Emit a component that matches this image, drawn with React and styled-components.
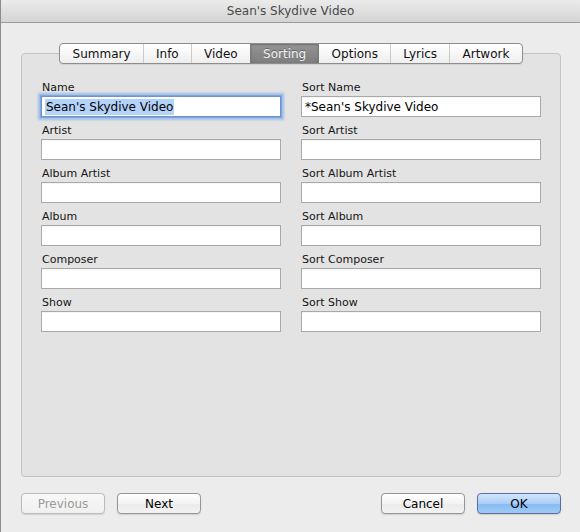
import React from "react";
import styled, { createGlobalStyle } from "styled-components";

const Global = createGlobalStyle`
  html, body { margin: 0; padding: 0; background: #ececec; }
  body { font-family: "DejaVu Sans", "Liberation Sans", sans-serif; }
  * { box-sizing: border-box; }
`;

const Window = styled.div`
  width: 580px;
  height: 532px;
  display: flex;
  flex-direction: column;
  background: #ececec;
  border-left: 1px solid #8c8c8c;
  overflow: hidden;
`;

const TitleBar = styled.div`
  height: 23px;
  flex: none;
  display: flex;
  align-items: center;
  justify-content: center;
  background: linear-gradient(#ebebeb, #d4d4d4);
  border-bottom: 1px solid #9b9b9b;
  color: #4a4a4a;
  font-size: 12px;
`;

const Body = styled.div`
  flex: 1;
  display: flex;
  flex-direction: column;
  padding: 20px 19px 18px 20px;
`;

const TabStrip = styled.div`
  position: relative;
  z-index: 1;
  align-self: center;
  display: flex;
  height: 21px;
  border: 1px solid #8d8d8d;
  border-radius: 4px;
  overflow: hidden;
  background: linear-gradient(#ffffff, #eeeeee);
  box-shadow: 0 1px 1px rgba(0, 0, 0, 0.08);
`;

const Tab = styled.div`
  display: flex;
  align-items: center;
  padding: 0 12.2px;
  font-size: 12px;
  color: ${(p) => (p.$active ? "#f2f2f2" : "#111")};
  background: ${(p) => (p.$active ? "linear-gradient(#959595, #7d7d7d)" : "transparent")};
  box-shadow: ${(p) => (p.$active ? "inset 0 1px 2px rgba(0,0,0,0.25)" : "none")};
  text-shadow: ${(p) => (p.$active ? "0 -1px 0 rgba(0,0,0,0.3)" : "none")};
  border-left: 1px solid ${(p) => (p.$plain ? "#cbcbcb" : "#7a7a7a")};
  &:first-child { border-left: none; }
`;

const Panel = styled.div`
  flex: 1;
  margin-top: -11px;
  background: #e3e3e3;
  border: 1px solid #c3c3c3;
  border-radius: 4px;
  padding: 26px 18px 0 19px;
`;

const Grid = styled.div`
  display: grid;
  grid-template-columns: 240px 240px;
  column-gap: 20px;
  row-gap: 6px;
`;

const Field = styled.div`
  display: flex;
  flex-direction: column;
`;

const Label = styled.div`
  height: 16px;
  line-height: 16px;
  padding-left: 1px;
  font-size: 11px;
  color: #151515;
`;

const TextBox = styled.div`
  height: 21px;
  background: #fff;
  border: 1px solid #a9a9a9;
  border-top-color: #8f8f8f;
  display: flex;
  align-items: center;
  padding: 1px 3px 0;
  font-size: 12px;
  color: #000;
  white-space: nowrap;
  box-shadow: ${(p) =>
    p.$focused
      ? "0 0 0 1px #7fa6e0, 0 0 2px 3px rgba(110, 160, 235, 0.55)"
      : "inset 0 1px 0 rgba(0,0,0,0.04)"};
  border-color: ${(p) => (p.$focused ? "#6f93cf" : "#a9a9a9")};
`;

const Selected = styled.span`
  background: #b4d3fa;
  line-height: 16px;
  padding: 0 1px;
`;

const Footer = styled.div`
  margin-top: 16px;
  display: flex;
  gap: 12px;
`;

const Spacer = styled.div`
  flex: 1;
`;

const Button = styled.button`
  width: 84px;
  height: 21px;
  padding: 0;
  border-radius: 4px;
  font-family: inherit;
  font-size: 12px;
  border: 1px solid ${(p) => (p.$primary ? "#5a6f9f" : p.disabled ? "#bcbcbc" : "#959595")};
  color: ${(p) => (p.disabled ? "#9a9a9a" : "#000")};
  background: ${(p) =>
    p.$primary
      ? "linear-gradient(#d3e6fc, #a9cdf6 50%, #86baf1 51%, #9fcaf6)"
      : p.disabled
      ? "linear-gradient(#f8f8f8, #f0f0f0)"
      : "linear-gradient(#ffffff, #f3f3f3 50%, #ebebeb 51%, #f3f3f3)"};
  box-shadow: 0 1px 1px rgba(0, 0, 0, 0.12);
`;

const tabs = ["Summary", "Info", "Video", "Sorting", "Options", "Lyrics", "Artwork"];
const active = "Sorting";

const fields = [
  ["Name", "Sort Name"],
  ["Artist", "Sort Artist"],
  ["Album Artist", "Sort Album Artist"],
  ["Album", "Sort Album"],
  ["Composer", "Sort Composer"],
  ["Show", "Sort Show"],
];

export default function App() {
  const ai = tabs.indexOf(active);
  return (
    <>
      <Global />
      <Window>
        <TitleBar>Sean's Skydive Video</TitleBar>
        <Body>
          <TabStrip>
            {tabs.map((t, i) => (
              <Tab
                key={t}
                $active={t === active}
                $plain={i !== ai && i !== ai + 1}
              >
                {t}
              </Tab>
            ))}
          </TabStrip>
          <Panel>
            <Grid>
              {fields.map(([a, b]) => (
                <React.Fragment key={a}>
                  <Field>
                    <Label>{a}</Label>
                    <TextBox role="textbox" $focused={a === "Name"}>
                      {a === "Name" ? <Selected>Sean's Skydive Video</Selected> : null}
                    </TextBox>
                  </Field>
                  <Field>
                    <Label>{b}</Label>
                    <TextBox role="textbox">
                      {b === "Sort Name" ? "*Sean's Skydive Video" : null}
                    </TextBox>
                  </Field>
                </React.Fragment>
              ))}
            </Grid>
          </Panel>
          <Footer>
            <Button disabled>Previous</Button>
            <Button>Next</Button>
            <Spacer />
            <Button>Cancel</Button>
            <Button $primary>OK</Button>
          </Footer>
        </Body>
      </Window>
    </>
  );
}
